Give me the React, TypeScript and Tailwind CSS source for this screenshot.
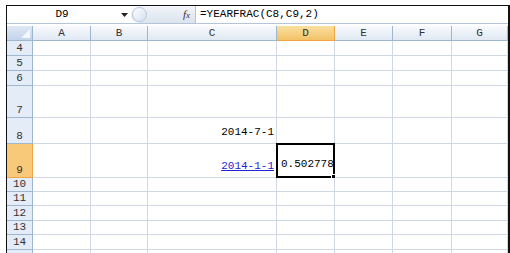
import React from "react";

const cols = ["A", "B", "C", "D", "E", "F", "G"];
const colWidths = ["w-[58px]", "w-[57px]", "w-[129px]", "w-[58px]", "w-[58px]", "w-[59px]", "w-[56px]"];

const rows = [
  { n: 4, h: "h-[15px]" },
  { n: 5, h: "h-[15px]" },
  { n: 6, h: "h-[15px]" },
  { n: 7, h: "h-[32px]" },
  { n: 8, h: "h-[26px]" },
  { n: 9, h: "h-[34px]" },
  { n: 10, h: "h-[14px]" },
  { n: 11, h: "h-[14px]" },
  { n: 12, h: "h-[15px]" },
  { n: 13, h: "h-[14px]" },
  { n: 14, h: "h-[15px]" },
  { n: 15, h: "h-[14px]" },
];

function FormulaBar() {
  return (
    <div className="flex h-[18px] items-stretch border-b border-[#b5c4d8] bg-white">
      {/* name box */}
      <div className="flex w-[110px] items-center justify-center text-black">D9</div>
      <div className="flex w-[14px] items-center justify-center">
        <svg width="7" height="4" viewBox="0 0 7 4">
          <path d="M0 0h7L3.5 4z" fill="#222" />
        </svg>
      </div>
      {/* resize grip + fx area */}
      <div className="relative flex w-[64px] items-center justify-end rounded-l-full bg-gradient-to-b from-[#f2f5fa] to-[#dbe3ee] pr-[5px]">
        <div className="absolute left-[1px] top-[1px] h-[15px] w-[15px] rounded-full border border-[#b9c8dc] bg-gradient-to-br from-[#ffffff] to-[#d3dfef]" />
        <span className="font-['Liberation_Serif',serif] text-[11px] italic text-[#333]">
          f<span className="text-[9px]">x</span>
        </span>
      </div>
      <div className="w-px bg-[#b5c4d8]" />
      <div className="flex flex-1 items-center pl-[4px] text-black">=YEARFRAC(C8,C9,2)</div>
    </div>
  );
}

function HeaderRow() {
  return (
    <div className="flex h-[15px]">
      <div className="relative w-[26px] border-b border-r border-[#9eb6ce] bg-gradient-to-b from-[#dfe8f5] to-[#c3d3ea]">
        <svg className="absolute bottom-[2px] right-[2px]" width="9" height="9" viewBox="0 0 9 9">
          <path d="M9 0V9H0z" fill="#f4f8fd" />
        </svg>
      </div>
      {cols.map((c, i) => (
        <div
          key={c}
          className={`${colWidths[i]} flex items-center justify-center border-b border-r ${
            c === "D"
              ? "border-[#f0a444] bg-gradient-to-b from-[#fae0a0] to-[#f2c266] text-[#333]"
              : "border-[#9eb6ce] bg-gradient-to-b from-[#f8fafd] to-[#e0e8f3] text-[#333]"
          }`}
        >
          {c}
        </div>
      ))}
    </div>
  );
}

function Cell({ col, row }: { col: string; row: number }) {
  if (col === "C" && row === 8) {
    return <span className="text-black">2014-7-1</span>;
  }
  if (col === "C" && row === 9) {
    return <span className="text-[#2323d6] underline">2014-1-1</span>;
  }
  return null;
}

export default function App() {
  return (
    <div className="h-[253px] w-[510px] overflow-hidden bg-white pl-[6px] pt-[5px] font-['Liberation_Mono',monospace] text-[11px] leading-none">
      <div className="h-[248px] border-l border-r-2 border-t border-[#111] bg-white">
        <FormulaBar />
        <div className="h-[2px] bg-white" />
        <HeaderRow />
        {rows.map((r) => (
          <div key={r.n} className={`flex ${r.h}`}>
            <div
              className={`flex w-[26px] items-end justify-center border-b border-r pb-[1px] ${
                r.n === 9
                  ? "border-[#f0a444] bg-[#f9c97a] text-[#333]"
                  : "border-[#9eb6ce] bg-[#e4ecf7] text-[#333]"
              }`}
            >
              {r.n < 15 ? r.n : null}
            </div>
            {cols.map((c, i) => (
              <div
                key={c}
                className={`${colWidths[i]} relative flex items-end justify-end border-b border-r border-[#d0d7e5] pb-[5px] pr-[2px]`}
              >
                <Cell col={c} row={r.n} />
                {c === "D" && r.n === 9 && (
                  <div className="absolute -left-[1px] -top-[1px] bottom-[-1px] right-[-1px] flex items-end justify-start border-2 border-black bg-white pb-[6px] pl-[3px]">
                    <span className="text-black">0.502778</span>
                    <div className="absolute -bottom-[3px] -right-[3px] h-[5px] w-[5px] border border-white bg-black" />
                  </div>
                )}
              </div>
            ))}
          </div>
        ))}
      </div>
    </div>
  );
}
